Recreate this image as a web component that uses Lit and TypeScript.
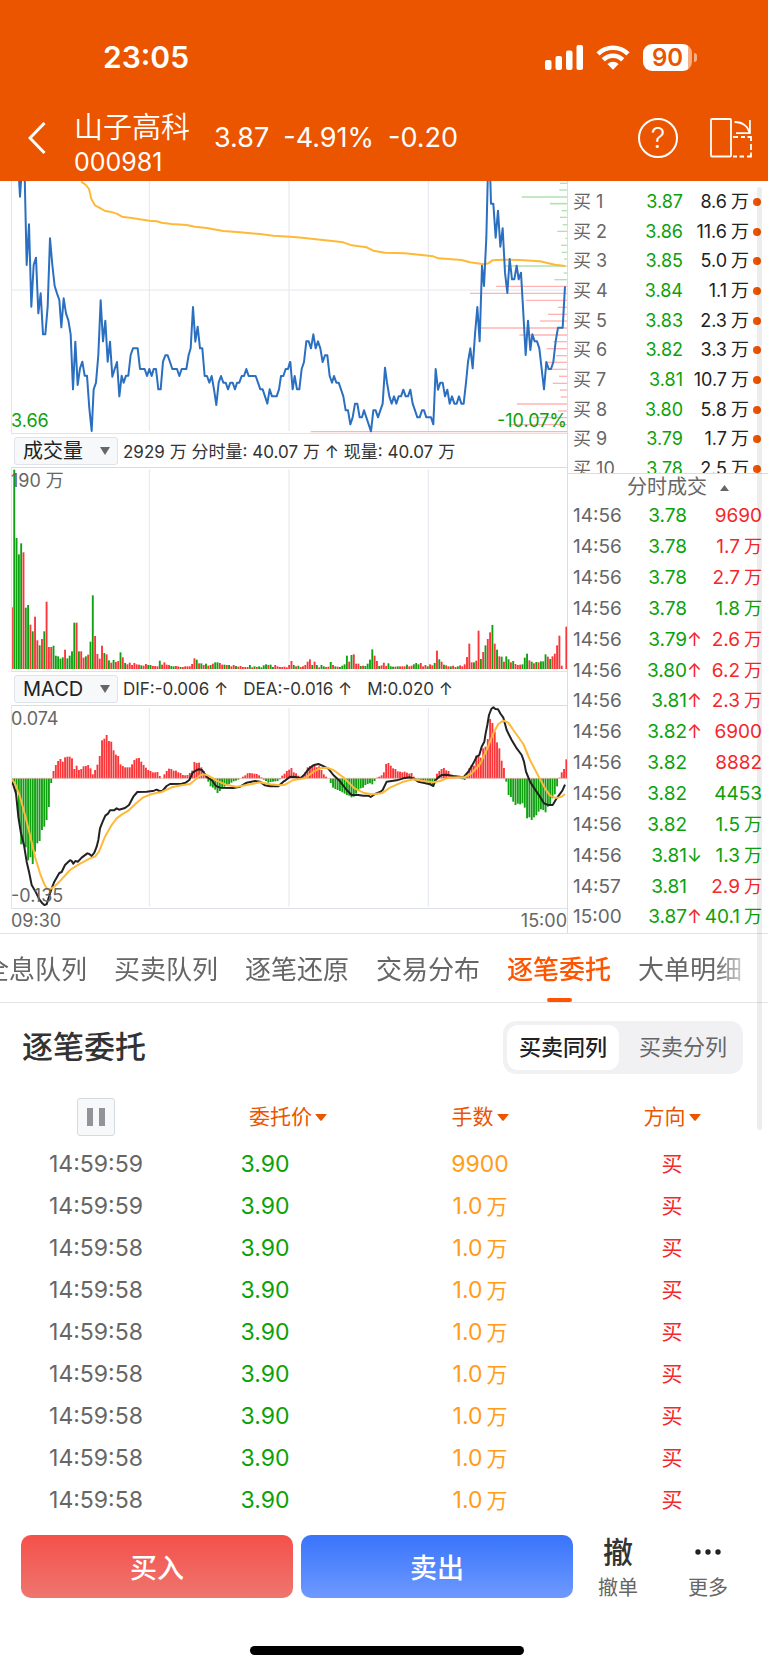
import { LitElement, html, svg, css } from "lit";
import { customElement, property, state } from "lit/decorators.js";
import { classMap } from "lit/directives/class-map.js";

/* One trading day is 241 one-minute slots; the plots use three units per pixel. */
const LEFT = 33;
const SLOT = 6.93;
const VIEW_LEFT = 36;
const VIEW_WIDTH = 1665;

const shift = (points: string, dx: number) =>
  points
    .trim()
    .split(/\s+/)
    .map((p) => {
      const [x, y] = p.split(",").map(Number);
      return `${x + dx},${y}`;
    })
    .join(" ");

const PRICE =
  `53,-60 60,65 68,-60 74,0 80,270 87,148 94,395 101,270 108,248 115,415 122,355 129,478 136,478 143,395 150,190 157,270 164,333 171,355 178,375 184,457 191,370 198,415 205,436 212,478 219,643 226,500 233,630 240,580 247,560 254,602 261,602 268,700 275,768 281,643 288,623 295,540 302,376 309,499 316,437 323,560 330,500 337,605 344,582 351,561 358,664 365,602 371,623 378,602 385,602 392,540 399,520 413,520 420,582 434,582 441,603 448,582 455,603 461,582 468,582 475,643 482,643 489,560 496,541 503,541 510,561 517,582 531,582 538,603 545,582 559,582 566,540 572,520 579,396 586,500 593,455 600,520 607,520 614,603 621,603 628,623 635,603 642,643 649,690 656,623 663,603 670,623 677,623 684,643 691,623 698,623 705,643 711,623 718,623 725,603 732,603 739,582 746,603 767,603 774,623 781,643 788,643 795,664 802,686 809,643 816,664 830,664 837,643 843,603 850,603 857,582 864,582 870,561 ` +
  shift(
    `31,561 38,643 44,603 51,643 58,643 65,582 72,561 79,499 86,499 93,520 100,478 107,520 114,499 121,520 128,561 135,541 142,541 149,603 156,623 162,603 169,623 176,623 183,643 190,664 197,706 204,706 211,748 218,727 225,686 232,686 239,727 246,727 252,706 259,727 266,748 273,769 280,706 287,706 294,727 301,706 308,686 315,578 321,623 328,664 335,686 342,664 349,686 356,664 363,664 370,644 377,664 384,664 391,644 398,686 405,706 412,727 419,727 426,706 432,706 439,727 453,727 460,748 467,582 474,644 481,623 488,623 495,664 502,644 509,686 516,664 523,686 530,686 537,664 544,686 551,686 558,623 564,561 571,520 578,580 585,478 592,396 599,499 606,272 612,333 619,188 624,-20 630,-20 633,86 640,86 647,188 654,107 661,215 668,160 675,293 682,354 689,252 696,313 703,313 710,272 716,313 723,293 730,415 737,540 744,437 751,525 757,478 764,499 771,499 778,520 785,582 792,643 799,561 806,582 813,582 820,561 827,499 834,458 848,458 855,334`,
    840,
  );

const AVERAGE =
  `243,20 258,30 267,42 274,72 285,91 302,100 315,108 330,110 350,116 366,125 400,130 448,137 470,139 485,143 515,147 560,150 585,155 620,159 670,168 720,172 780,177 820,182 870,185 ` +
  shift(
    `50,187 80,190 150,197 190,202 215,211 260,217 280,227 315,233 375,235 460,244 475,250 545,255 570,262 612,268 625,265 637,256 670,254 720,255 780,259 825,269 855,273`,
    840,
  );

/* Resting orders per price level: [y, start x, weight]. */
const ASKS = [[25, 840, 1], [45, 838, 1], [66, 725, 2], [86, 810, 2], [107, 845, 1], [127, 840, 1], [149, 848, 1], [169, 832, 1], [190, 856, 1], [211, 843, 1], [232, 845, 1], [252, 852, 1], [273, 672, 2], [294, 851, 1], [314, 823, 1]];
const BIDS = [[334, 648], [355, 570], [376, 738], [397, 834], [418, 804], [438, 780], [459, 597], [480, 718], [500, 820], [521, 800], [542, 828], [562, 798], [583, 797], [604, 837], [625, 818], [645, 840], [666, 842], [687, 711], [708, 834], [728, 757], [749, 686], [770, 92]];

/* Volume per minute: r = up, g = down, then the height. */
const VOLUME =
  `r185 g598 g393 g344 g377 r350 g184 g192 r133 g113 r157 r86 g71 r90 g113 r202 r66 r66 g70 g40 g38 g31 g35 r58 g32 g40 g53 g139 r139 g53 r53 r34 g38 r43 g82 g221 r99 r45 r31 r70 g48 r44 g26 r19 g27 r21 r24 g50 r35 g18 r14 r19 r12 r18 r14 r13 g11 r10 r15 g12 g12 r9 r9 r8 g25 r13 r20 r13 r12 g9 g8 r9 r8 g6 r6 r8 r8 r8 r15 r32 g28 r17 g17 r12 g16 r10 g12 r16 g20 g20 r18 r13 g13 r12 g12 r8 r12 g9 r7 r9 r6 r6 r6 g12 r5 g8 r6 g8 g5 g11 g14 r12 g13 g6 r12 r8 r6 r6 r7 r5 r12 r24 g12 r8 g10 r6 r8 r12 r22 r29 g12 r22 g12 r5 g12 g8 r6 r7 g21 r12 g8 r7 g6 g10 g14 g40 r22 g42 r44 r16 r16 g9 r10 g9 g16 g28 g59 r40 r24 g9 r11 r19 r9 g17 g8 g7 r7 g8 r8 r8 r8 g13 r8 r10 g14 g18 g14 r18 r8 r12 g8 r14 r11 g18 r55 g29 r22 g13 r11 r8 g8 r10 r6 g8 r11 r8 r14 r36 r76 r20 g20 r25 r115 g30 r51 g71 r90 r110 g132 r76 g58 r38 g37 r22 g38 g29 r20 g24 r15 r12 r13 g14 g34 g46 r26 g22 r17 g21 r20 g23 g23 g44 r37 g30 r38 r46 r71 r100 r10 r0 r127`.split(" ");

const MACD =
  `-4 -12 -40 -130 -198 -198 -207 -246 -237 -257 -220 -195 -188 -155 -145 -125 -86 -14 22 40 52 58 50 63 65 65 60 28 38 25 28 36 37 40 30 12 25 41 67 114 119 130 112 110 84 71 67 42 37 33 33 33 42 55 60 61 50 40 32 25 22 18 18 19 7 0 12 22 29 28 23 23 18 16 10 9 10 16 23 49 46 47 33 22 10 -10 -24 -28 -34 -44 -38 -30 -25 -22 -18 -13 -9 -7 -4 0 5 9 15 16 15 14 13 9 3 -4 -8 -13 -11 -10 -9 -8 -3 8 14 22 26 31 18 15 8 3 5 18 33 37 39 38 33 36 25 12 5 0 -14 -28 -32 -35 -38 -42 -46 -50 -52 -57 -55 -46 -36 -30 -28 -20 -17 -15 -18 -8 2 5 9 18 43 46 38 30 28 21 20 18 20 17 14 16 5 -3 -6 -9 -10 -11 -13 -18 -22 -14 14 22 28 31 24 22 8 6 3 0 -2 -3 -5 16 30 40 38 68 68 62 90 95 118 178 166 140 108 90 53 31 -10 -50 -56 -70 -80 -76 -78 -75 -88 -120 -117 -125 -117 -111 -100 -93 -95 -102 -85 -80 -60 -48 -24 2 18 28 57`.split(" ").map(Number);

const DIF =
  `33,270 40,285 48,310 55,380 62,425 72,465 80,515 88,550 95,585 105,602 118,628 127,640 133,645 140,643 147,620 155,595 163,575 178,549 185,546 195,525 210,511 214,512 220,521 226,513 234,515 245,503 262,490 268,492 275,498 283,488 290,470 295,450 300,415 308,395 316,377 324,371 330,361 342,361 350,355 357,359 375,354 387,345 400,320 412,306 440,305 462,302 470,299 478,303 487,303 500,288 510,282 545,281 557,278 568,270 578,248 590,240 597,238 606,240 613,250 622,262 635,270 648,288 660,293 700,294 720,290 740,278 765,273 780,275 795,286 810,289 835,289 850,275 ` +
  shift(
    `15,272 30,260 45,261 62,264 72,255 85,238 100,226 115,222 127,227 145,236 160,255 180,274 200,300 215,315 235,315 250,317 265,317 272,321 285,312 300,306 308,300 320,275 350,271 370,265 390,262 403,267 415,275 430,278 450,283 460,288 466,272 475,262 485,255 500,254 520,258 550,262 565,245 580,220 590,200 598,195 605,170 613,155 617,130 622,105 627,75 634,57 640,52 646,57 654,58 662,72 670,83 680,120 695,150 708,172 725,195 732,215 738,245 750,275 765,298 783,325 792,340 805,345 818,345 830,325 847,302 855,284`,
    840,
  );

const DEA =
  `33,266 45,280 60,320 75,375 90,435 105,500 120,550 133,583 142,597 150,598 165,588 185,568 210,540 235,524 270,505 285,500 297,485 315,440 335,405 350,385 365,374 385,362 410,338 430,322 455,312 485,306 515,292 545,286 570,282 585,270 600,256 612,253 625,257 650,272 680,285 710,290 740,285 780,277 810,283 840,286 ` +
  shift(
    `15,284 40,270 75,265 100,245 120,235 140,233 160,240 190,262 225,296 250,308 275,313 305,310 330,293 370,275 400,268 430,273 460,277 480,273 505,263 555,261 575,250 600,222 620,180 640,130 655,102 670,92 685,98 700,120 730,162 750,210 775,258 795,295 810,317 825,323 835,323 845,320 855,312`,
    840,
  );

const gridColumns = (y1: number, y2: number) =>
  [448, 867, 1285].map((x) => svg`<line class="grid" x1=${x} x2=${x} y1=${y1} y2=${y2}></line>`);

/* "1.0万" is drawn as a figure followed by a slightly smaller unit. */
const amount = (text: string) =>
  text.endsWith("万") ? html`${text.slice(0, -1)}<span class="unit">万</span>` : html`${text}`;

@customElement("stock-chart")
export class StockChart extends LitElement {
  @property() indicator = "成交量";

  static styles = css`
    :host { display: block; padding-left: 11px; border-right: 1px solid #d9dce2; }
    .plot { position: relative; border-left: 1px solid #e3e6ec; border-bottom: 1px solid #dfe2e8; }
    .plot.framed { border-top: 1px solid #d9dce2; }
    .plot > svg { display: block; width: 100%; height: 202px; overflow: hidden; }
    .price > svg { height: 252px; }
    .volume > svg { height: 203px; }
    .grid { stroke: #e3e6ed; stroke-width: 1px; }
    .grid, .line { vector-effect: non-scaling-stroke; }
    .line { fill: none; stroke-width: 2px; stroke-linejoin: round; }
    .blue { stroke: #2b6fc0; }
    .yellow { stroke: #ffb938; }
    .black { stroke: #222; }
    .ask { stroke: #b0e2ae; }
    .bid { stroke: #ffb3b3; }
    .up { fill: #fb3538; }
    .down { fill: #0fa10f; }
    .mark { position: absolute; font-size: 18px; line-height: 22px; color: #666; }
    .tl { top: 2px; left: -1px; }
    .bl { bottom: 1px; left: -1px; }
    .br { bottom: 1px; right: 0; }
    .green { color: #0aa10a; }
    .info { display: flex; align-items: center; gap: 15px; height: 33px; padding-left: 3px; font-size: 17px; color: #333; white-space: nowrap; overflow: hidden; }
    .picker { position: relative; flex: none; margin-right: -10px; }
    .caret { position: absolute; z-index: 1; right: 8px; top: 10px; width: 10px; height: 8px; fill: #666; pointer-events: none; }
    select { appearance: none; display: block; width: 104px; height: 28px; padding: 0 0 0 8px; border: 1px solid #dfe3ea; border-radius: 3px; background: #f7f8fa; color: #222; font: inherit; font-size: 20px; line-height: 26px; }
    .axis { display: flex; justify-content: space-between; font-size: 18px; line-height: 24px; color: #666; }
    .unit { margin-left: 5px; }
  `;

  private picker(current: string, label: string) {
    return html`<div class="picker">
      <select aria-label=${label}>
        ${["成交量", "MACD", "KDJ"].map((o) => html`<option ?selected=${o === current}>${o}</option>`)}
      </select>
      <svg class="caret" viewBox="0 0 10 8"><path d="M0 0h10L5 8z"></path></svg>
    </div>`;
  }

  render() {
    return html`
      <div class="plot price">
        <svg viewBox="${VIEW_LEFT} 18 ${VIEW_WIDTH} 756" preserveAspectRatio="none" role="img" aria-label="分时走势">
          <line class="grid" x1="33" x2="1701" y1="345" y2="345"></line>
          ${gridColumns(18, 768)}
          ${ASKS.map(([y, x, w]) => svg`<line class="ask" x1=${x + 840} x2="1701" y1=${y} y2=${y} stroke-width=${w > 1 ? 5 : 4}></line>`)}
          ${BIDS.map(([y, x]) => svg`<line class="bid" x1=${x + 840} x2="1701" y1=${y} y2=${y} stroke-width="4"></line>`)}
          <polyline class="line yellow" points=${AVERAGE}></polyline>
          <polyline class="line blue" points=${PRICE}></polyline>
        </svg>
        <span class="mark bl green">3.66</span>
        <span class="mark br green">-10.07%</span>
      </div>
      <div class="info">${this.picker(this.indicator, "副图一指标")}<span>2929<span class="unit">万</span> 分时量: 40.07<span class="unit">万</span> ↑ 现量: 40.07<span class="unit">万</span></span></div>
      <div class="plot framed volume">
        <svg viewBox="${VIEW_LEFT} 24 ${VIEW_WIDTH} 609" preserveAspectRatio="none" role="img" aria-label="成交量">
          ${gridColumns(28, 626)}
          ${VOLUME.map((v, i) => {
            const h = Number(v.slice(1));
            return svg`<rect class=${v[0] === "r" ? "up" : "down"} x=${LEFT + i * SLOT} y=${627 - h} width="5.6" height=${h}></rect>`;
          })}
        </svg>
        <span class="mark tl">190<span class="unit">万</span></span>
      </div>
      <div class="info">${this.picker("MACD", "副图二指标")}<span>DIF:-0.006 ↑</span><span>DEA:-0.016 ↑</span><span>M:0.020 ↑</span></div>
      <div class="plot framed">
        <svg viewBox="${VIEW_LEFT} 48 ${VIEW_WIDTH} 606" preserveAspectRatio="none" role="img" aria-label="MACD">
          ${gridColumns(54, 650)}
          ${MACD.map((m, i) => svg`<rect class=${m > 0 ? "up" : "down"} x=${LEFT + i * SLOT} y=${m > 0 ? 265 - m : 265} width="5.6" height=${Math.abs(m)}></rect>`)}
          <line x1="33" x2="1701" y1="265" y2="265" stroke="#dca9a4" stroke-width="2"></line>
          <polyline class="line black" points=${DIF}></polyline>
          <polyline class="line yellow" points=${DEA}></polyline>
        </svg>
        <span class="mark tl">0.074</span>
        <span class="mark bl">-0.135</span>
      </div>
      <div class="axis"><span>09:30</span><span>15:00</span></div>
    `;
  }
}

const BOOK = [
  ["3.87", "8.6万"], ["3.86", "11.6万"], ["3.85", "5.0万"], ["3.84", "1.1万"], ["3.83", "2.3万"],
  ["3.82", "3.3万"], ["3.81", "10.7万"], ["3.80", "5.8万"], ["3.79", "1.7万"], ["3.78", "2.5万"],
];

/* time, price, tick arrow, quantity, side */
const TRADES = [
  ["14:56", "3.78", "", "9690", "r"], ["14:56", "3.78", "", "1.7万", "r"], ["14:56", "3.78", "", "2.7万", "r"],
  ["14:56", "3.78", "", "1.8万", "g"], ["14:56", "3.79", "↑", "2.6万", "r"], ["14:56", "3.80", "↑", "6.2万", "r"],
  ["14:56", "3.81", "↑", "2.3万", "r"], ["14:56", "3.82", "↑", "6900", "r"], ["14:56", "3.82", "", "8882", "r"],
  ["14:56", "3.82", "", "4453", "g"], ["14:56", "3.82", "", "1.5万", "g"], ["14:56", "3.81", "↓", "1.3万", "g"],
  ["14:57", "3.81", "", "2.9万", "r"], ["15:00", "3.87", "↑", "40.1万", "g"],
];

@customElement("quote-panel")
export class QuotePanel extends LitElement {
  static styles = css`
    :host { display: block; overflow: hidden; }
    table { width: 100%; border-collapse: collapse; table-layout: fixed; white-space: nowrap; }
    td { padding: 0; line-height: 24px; }
    .book { height: 292px; overflow: hidden; border-bottom: 1px solid #d9dce2; }
    .book table { height: 297px; margin-top: 6px; font-size: 18px; }
    .level { width: 50px; padding-left: 5px; color: #666; }
    .num { text-align: right; }
    .book .price { width: 60px; }
    .price, .g { color: #0aa10a; }
    .r { color: #f5272b; }
    .book .qty { color: #222; }
    .unit { margin-left: 4px; font-size: 18px; }
    .dot { width: 19px; }
    .dot::before { content: ""; display: block; width: 8px; height: 8px; margin-left: 4px; border-radius: 50%; background: #eb5500; }
    .toggle { display: flex; align-items: center; justify-content: center; gap: 13px; width: 100%; height: 27px; padding: 0 0 0 20px; border: 0; background: none; color: #666; font: inherit; font-size: 20px; line-height: 27px; }
    .toggle svg { width: 9px; height: 6px; fill: #666; }
    .trades { height: 432px; font-size: 19px; }
    .time { width: 58px; padding-left: 5px; color: #666; }
    .trades .price { width: 56px; }
    .trades .tick { width: 13px; font-size: 18px; text-align: center; }
    .trades .qty { padding-right: 6px; }
  `;

  render() {
    return html`
      <div class="book">
        <table aria-label="买盘">
          <tbody>
            ${BOOK.map(([price, qty], i) => html`<tr>
              <td class="level">买 ${i + 1}</td><td class="price num">${price}</td><td class="qty num">${amount(qty)}</td><td class="dot"></td>
            </tr>`)}
          </tbody>
        </table>
      </div>
      <button class="toggle">分时成交<svg viewBox="0 0 9 6"><path d="M0 6 4.5 0 9 6z"></path></svg></button>
      <table class="trades" aria-label="分时成交">
        <tbody>
          ${TRADES.map(([time, price, tick, qty, side]) => html`<tr>
            <td class="time">${time}</td><td class="price num">${price}</td>
            <td class="tick ${tick === "↑" ? "r" : "g"}">${tick}</td><td class="qty num ${side}">${amount(qty)}</td>
          </tr>`)}
        </tbody>
      </table>
    `;
  }
}

const TABS = ["全息队列", "买卖队列", "逐笔还原", "交易分布", "逐笔委托", "大单明细"];

const ORDERS = [
  ["14:59:59", "9900"], ["14:59:59", "1.0万"], ["14:59:58", "1.0万"], ["14:59:58", "1.0万"], ["14:59:58", "1.0万"],
  ["14:59:58", "1.0万"], ["14:59:58", "1.0万"], ["14:59:58", "1.0万"], ["14:59:58", "1.0万"],
];

@customElement("app-root")
export class AppRoot extends LitElement {
  @state() private tab = "逐笔委托";
  @state() private mode = "买卖同列";

  static styles = css`
    :host { display: block; background: #fff; color: #222; font-family: Inter, "Noto Sans CJK SC", sans-serif; overflow: hidden; }
    button { margin: 0; padding: 0; border: 0; background: none; color: inherit; font: inherit; cursor: pointer; white-space: nowrap; }
    svg { display: block; }

    header { background: #eb5500; color: #fff; }
    .status { display: flex; align-items: center; gap: 13px; height: 34px; padding: 40px 71px 21px 103px; }
    .clock { margin-right: auto; font-size: 30px; line-height: 34px; font-weight: 600; }
    .battery { display: flex; align-items: center; gap: 2px; }
    .level { width: 49px; height: 27px; border-radius: 9px; background: linear-gradient(90deg, #fff 45px, #f6ae85 45px); color: #eb5500; font-size: 24px; font-weight: 600; line-height: 27px; text-align: center; }
    .tip { width: 3px; height: 9px; border-radius: 0 4px 4px 0; background: #f6ae85; }
    .nav { display: flex; align-items: center; height: 86px; padding: 0 16px 0 28px; }
    .stock { align-self: flex-end; width: 140px; margin: 0 0 1px 28px; line-height: 35px; }
    .name { margin: 0; font-size: 29px; font-weight: 350; line-height: 35px; }
    .code { font-size: 25px; }
    .quote { display: flex; gap: 14px; margin-right: auto; font-size: 27px; line-height: 34px; }
    .help { width: 40px; height: 40px; margin-right: 32px; border: 2px solid #fff; border-radius: 50%; font-size: 29px; line-height: 36px; font-weight: 300; text-align: center; }

    main { position: relative; }
    .scrollbar { position: absolute; top: 6px; right: 6px; width: 5px; height: 943px; border-radius: 3px; background: rgba(0, 0, 0, 0.07); pointer-events: none; }
    .market { display: grid; grid-template-columns: minmax(0, 1fr) 200px; border-bottom: 1px solid #dfe2e8; }

    .tabs { overflow: hidden; border-bottom: 1px solid #e4e4e6; }
    .strip { display: flex; gap: 27px; margin-left: -17px; -webkit-mask-image: linear-gradient(90deg, #000 calc(100% - 54px), transparent calc(100% - 12px)); mask-image: linear-gradient(90deg, #000 calc(100% - 54px), transparent calc(100% - 12px)); }
    .tab { position: relative; flex: none; height: 68px; padding-top: 4px; font-size: 26px; line-height: 64px; color: #666; }
    .tab.on { color: #ff5500; font-weight: 500; }
    .tab.on::after { content: ""; position: absolute; left: 50%; bottom: 0; width: 25px; height: 4px; margin-left: -12px; border-radius: 2px; background: #ff5500; }

    .heading { display: flex; align-items: center; justify-content: space-between; height: 88px; padding: 0 25px 0 22px; }
    h2 { margin: 0; font-size: 31px; line-height: 40px; font-weight: 500; color: #333; }
    .segmented { display: flex; gap: 8px; padding: 4px; border-radius: 13px; background: #f1f1f4; }
    .segment { width: 112px; height: 45px; border-radius: 11px; font-size: 22px; line-height: 44px; color: #666; }
    .segment.on { background: #fff; color: #222; font-weight: 500; }

    .orders { width: 100%; border-collapse: collapse; table-layout: fixed; text-align: center; font-size: 23px; line-height: 30px; }
    th { height: 52px; padding: 0; font-size: 21px; font-weight: 400; color: #eb5500; }
    td { height: 42px; padding: 0; white-space: nowrap; }
    .sort { display: inline-flex; align-items: center; gap: 3px; }
    .sort svg { width: 12px; height: 7px; fill: #eb5500; }
    .pause { display: flex; align-items: center; justify-content: center; gap: 6px; width: 38px; height: 38px; margin: 0 auto; border: 1px solid #d5d9e0; border-radius: 3px; background: #f7f8fa; }
    .pause i { width: 6px; height: 18px; background: #909399; }
    .time { color: #666; }
    td.price { padding-right: 46px; color: #0aa10a; }
    .hands { color: #ff9c1a; }
    .unit { margin-left: 4px; font-size: 21px; }
    .side { color: #f5272b; font-size: 21px; }

    footer { padding: 9px 15px 14px 21px; }
    .actions { display: flex; align-items: center; }
    .trade { flex: 1; height: 63px; border-radius: 10px; color: #fff; font-size: 27px; font-weight: 500; }
    .buy { margin-right: 8px; background: linear-gradient(#f5504a, #ee766f); }
    .sell { background: linear-gradient(#3874fb, #6e99ff); }
    .tool { display: flex; flex-direction: column; align-items: center; width: 90px; font-size: 20px; line-height: 28px; color: #666; }
    .glyph { display: flex; align-items: center; height: 44px; font-size: 30px; line-height: 44px; font-weight: 500; color: #333; }
    .home { width: 274px; height: 9px; margin: 44px auto 0; border-radius: 5px; background: #000; }
  `;

  private sortHeader(label: string) {
    return html`<th scope="col"><button class="sort">${label}<svg viewBox="0 0 12 7"><path d="M1 0h10q1 0 .4.8L6.7 6.4q-.7.8-1.4 0L.6.8Q0 0 1 0z"></path></svg></button></th>`;
  }

  render() {
    return html`
      <header>
        <div class="status">
          <span class="clock">23:05</span>
          <svg width="38" height="25" viewBox="0 0 38 25" fill="#fff" aria-label="信号">
            <rect x="0" y="15" width="6.500" height="10" rx="2"></rect>
            <rect x="10.500" y="11" width="6.500" height="14" rx="2"></rect>
            <rect x="21" y="5.500" width="6.500" height="19.500" rx="2"></rect>
            <rect x="31.500" y="0" width="6.500" height="25" rx="2"></rect>
          </svg>
          <svg width="34" height="25" viewBox="0 0 34 25" fill="none" stroke="#fff" stroke-width="4.600" aria-label="无线网络">
            <path d="M2 8.800a21.500 21.500 0 0 1 30 0"></path>
            <path d="M7.300 14.800a13.700 13.700 0 0 1 19.400 0"></path>
            <path d="M17 24.700l-5.600-5.600a7.900 7.900 0 0 1 11.200 0z" fill="#fff" stroke="none"></path>
          </svg>
          <span class="battery"><span class="level">90</span><span class="tip"></span></span>
        </div>
        <div class="nav">
          <button aria-label="返回"><svg width="18" height="32" viewBox="0 0 18 32" fill="none" stroke="#fff" stroke-width="3"><path d="M16.500 1 2 16l14.500 15"></path></svg></button>
          <div class="stock"><h1 class="name">山子高科</h1><div class="code">000981</div></div>
          <div class="quote"><span>3.87</span><span>-4.91%</span><span>-0.20</span></div>
          <button class="help" aria-label="帮助">?</button>
          <button aria-label="切换布局">
            <svg width="42" height="40" viewBox="0 0 42 40" fill="none" stroke="#fff" stroke-width="1.800">
              <rect x="1" y="1" width="20" height="37.500" rx="1"></rect>
              <path d="M24.500 4c8 0 14 4.500 15 11.500M39.900 2v13.200H26"></path>
              <path d="M23 19h5M31 19h4M37.500 19H41v4M41 26v6M41 34.500v4H37M34 38.500h-4.500M27 38.500h-4"></path>
            </svg>
          </button>
        </div>
      </header>
      <main>
        <section class="market">
          <stock-chart></stock-chart>
          <quote-panel></quote-panel>
        </section>
        <nav class="tabs">
          <div class="strip" role="tablist">
            ${TABS.map((t) => html`<button role="tab" aria-selected=${t === this.tab} class=${classMap({ tab: true, on: t === this.tab })} @click=${() => (this.tab = t)}>${t}</button>`)}
          </div>
        </nav>
        <section>
          <div class="heading">
            <h2>逐笔委托</h2>
            <div class="segmented">
              ${["买卖同列", "买卖分列"].map((m) => html`<button aria-pressed=${m === this.mode} class=${classMap({ segment: true, on: m === this.mode })} @click=${() => (this.mode = m)}>${m}</button>`)}
            </div>
          </div>
          <table class="orders">
            <thead>
              <tr>
                <th scope="col"><button class="pause" aria-label="暂停"><i></i><i></i></button></th>
                ${["委托价", "手数", "方向"].map((l) => this.sortHeader(l))}
              </tr>
            </thead>
            <tbody>
              ${ORDERS.map(([time, hands]) => html`<tr><td class="time">${time}</td><td class="price">3.90</td><td class="hands">${amount(hands)}</td><td class="side">买</td></tr>`)}
            </tbody>
          </table>
        </section>
        <div class="scrollbar"></div>
      </main>
      <footer>
        <div class="actions">
          <button class="trade buy">买入</button>
          <button class="trade sell">卖出</button>
          <button class="tool"><span class="glyph">撤</span>撤单</button>
          <button class="tool"><span class="glyph"><svg width="26" height="6" viewBox="0 0 26 6" fill="#222"><circle cx="3" cy="3" r="2.700"></circle><circle cx="13" cy="3" r="2.700"></circle><circle cx="23" cy="3" r="2.700"></circle></svg></span>更多</button>
        </div>
        <div class="home"></div>
      </footer>
    `;
  }
}
